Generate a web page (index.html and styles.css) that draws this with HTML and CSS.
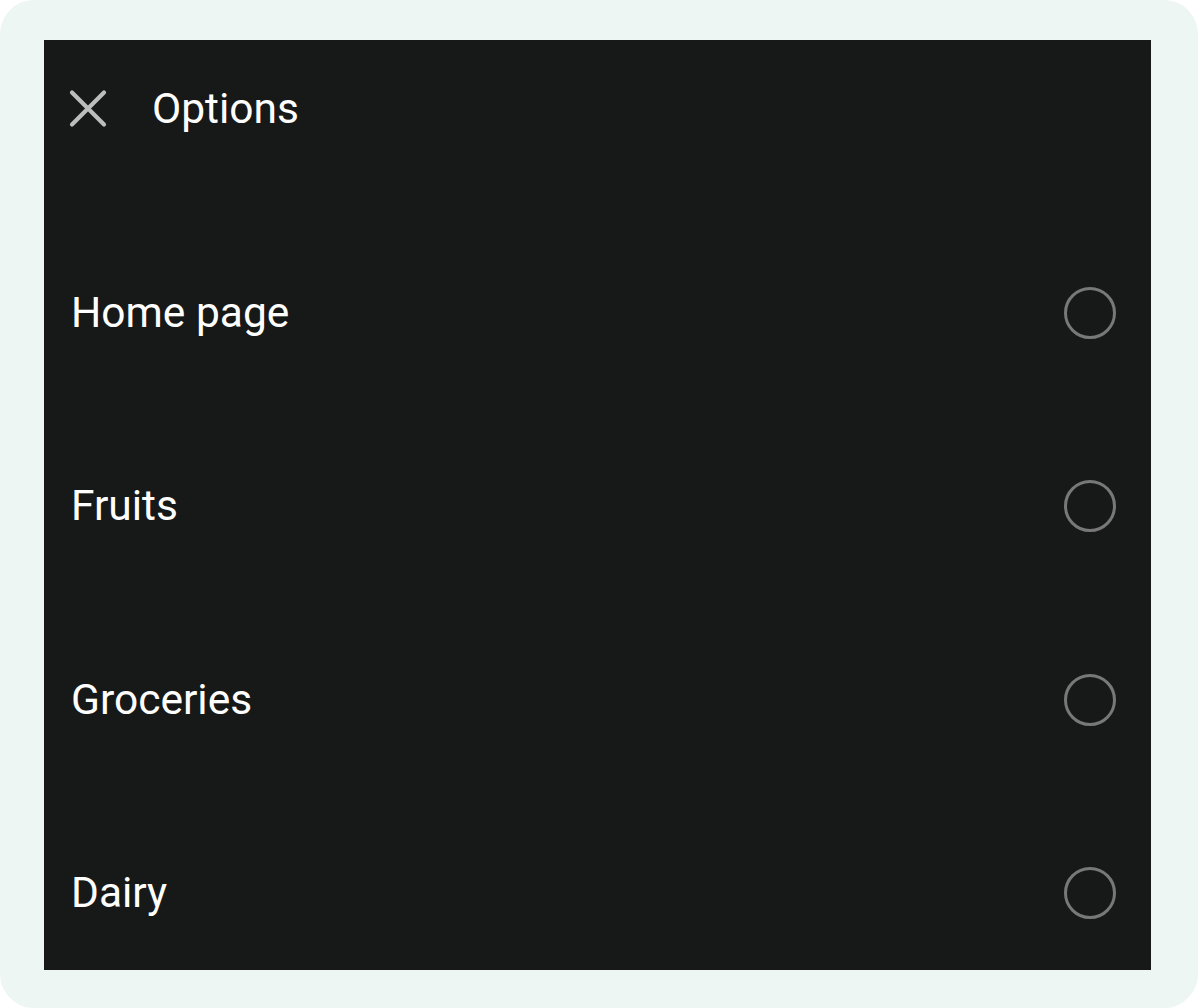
FILE: index.html
```html
<!DOCTYPE html>
<html>
<head>
<meta charset="utf-8">
<link rel="stylesheet" href="styles.css">
</head>
<body>
<div class="frame">
  <div class="panel">
    <div class="header">
      <svg class="close" width="40" height="40" viewBox="0 0 40 40">
        <path d="M4 3.5 L36 35.5 M36 3.5 L4 35.5" stroke="#bdbdbd" stroke-width="4.2" stroke-linecap="round" fill="none"/>
      </svg>
      <span class="title">Options</span>
    </div>
    <ul class="list">
      <li class="row"><span class="label">Home page</span><span class="radio"></span></li>
      <li class="row"><span class="label">Fruits</span><span class="radio"></span></li>
      <li class="row"><span class="label">Groceries</span><span class="radio"></span></li>
      <li class="row"><span class="label">Dairy</span><span class="radio"></span></li>
    </ul>
  </div>
</div>
</body>
</html>
```
FILE: styles.css
```css
html, body {
  margin: 0;
  padding: 0;
  background: #ffffff;
}
.frame {
  width: 1198px;
  height: 1008px;
  box-sizing: border-box;
  background: #edf6f3;
  border-radius: 34px;
  padding: 40px 47px 38px 44px;
}
.panel {
  width: 1107px;
  height: 930px;
  background: #171918;
  overflow: hidden;
  font-family: Roboto, "Liberation Sans", sans-serif;
  color: #ffffff;
}
.header {
  height: 138px;
  display: flex;
  align-items: center;
  padding-left: 24px;
}
.close {
  display: block;
  margin-right: 44px;
}
.title {
  font-size: 42.5px;
  line-height: 1;
}
.list {
  list-style: none;
  margin: 0;
  padding: 38px 0 0 0;
}
.row {
  height: 193.5px;
  display: flex;
  align-items: center;
  justify-content: space-between;
  padding: 0 35px 0 27px;
}
.label {
  font-size: 42.5px;
  line-height: 1;
}
.radio {
  width: 46px;
  height: 46px;
  border: 3px solid #787878;
  border-radius: 50%;
}
```
